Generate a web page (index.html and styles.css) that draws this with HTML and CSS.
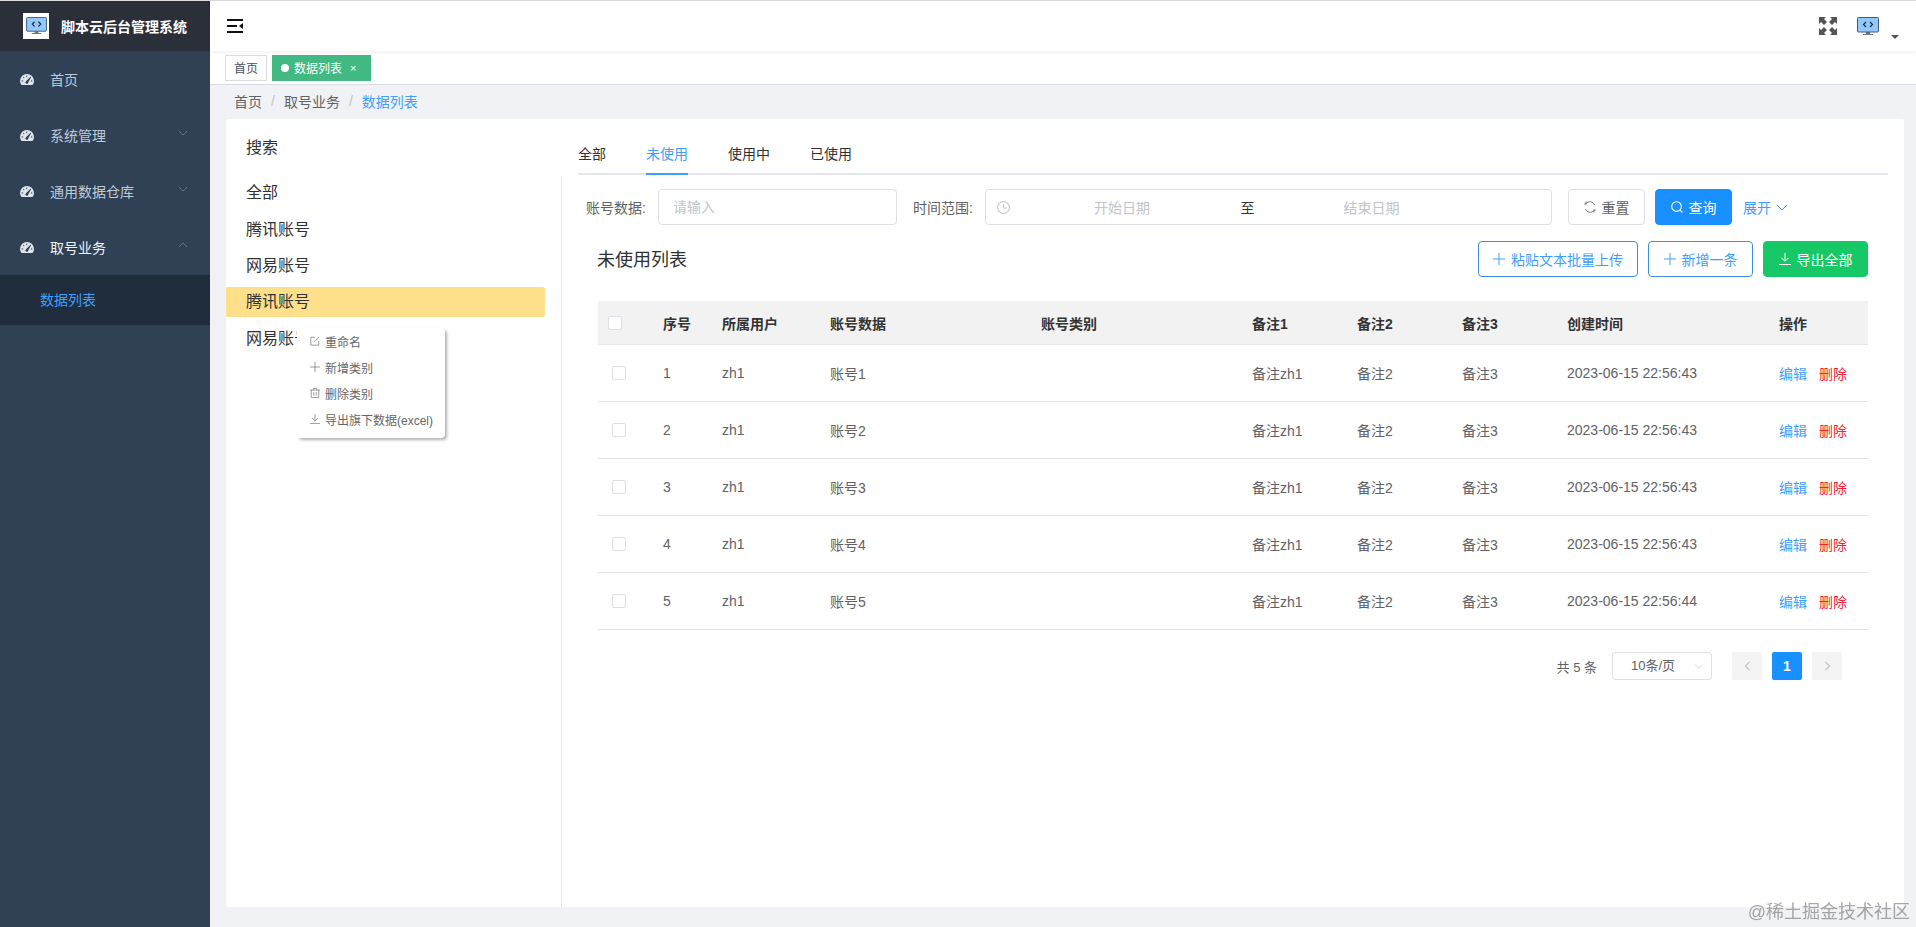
FILE: index.html
```html
<!DOCTYPE html>
<html lang="zh-CN">
<head>
<meta charset="utf-8">
<title>脚本云后台管理系统</title>
<link rel="stylesheet" href="styles.css">
</head>
<body>
<svg class="defs" width="0" height="0" aria-hidden="true">
  <symbol id="gauge" viewBox="0 0 14 11">
    <path fill="#dfe4ea" d="M1.6 11C.6 9.900 0 8.500 0 7a7 7 0 0 1 14 0c0 1.500-.6 2.900-1.600 4z"/>
    <g fill="#304156">
      <circle cx="2.300" cy="7" r=".7"/><circle cx="3.700" cy="3.600" r=".7"/><circle cx="6.800" cy="2.300" r=".7"/><circle cx="11.700" cy="7" r=".7"/>
      <path d="M10.500 2.700l.7.400-3 5.500a1.400 1.400 0 1 1-2.200-1.400z"/>
    </g>
  </symbol>
  <symbol id="monitor" viewBox="0 0 22 19">
    <path fill="#6d7787" d="M9 15h4v2h3v1H6v-1h3z"/>
    <rect x=".5" y=".5" width="21" height="14.500" rx="1" fill="#93c9f8" stroke="#41597a"/>
    <path fill="none" stroke="#1b2a44" stroke-width="1.200" d="M9 5L6.500 7.500 9 10M13 5l2.500 2.500L13 10"/>
  </symbol>
  <symbol id="plus" viewBox="0 0 12 12"><path fill="none" stroke="currentColor" d="M6 0v12M0 6h12"/></symbol>
  <symbol id="download" viewBox="0 0 12 12"><path fill="none" stroke="currentColor" d="M6 0v8M2.500 4.800L6 8.300l3.500-3.500M0 11.500h12"/></symbol>
  <symbol id="chev" viewBox="0 0 12 7"><path fill="none" stroke="currentColor" d="M1 1l5 5 5-5"/></symbol>
</svg>
<div class="app">
  <aside class="sidebar">
    <div class="brand">
      <div class="brand-logo"><svg class="brand-mon"><use href="#monitor"/></svg></div>
      <span class="brand-name">脚本云后台管理系统</span>
    </div>
    <nav>
      <div class="nav-item"><svg class="nav-ic"><use href="#gauge"/></svg><span>首页</span></div>
      <div class="nav-item"><svg class="nav-ic"><use href="#gauge"/></svg><span>系统管理</span><svg class="nav-arrow"><use href="#chev"/></svg></div>
      <div class="nav-item"><svg class="nav-ic"><use href="#gauge"/></svg><span>通用数据仓库</span><svg class="nav-arrow"><use href="#chev"/></svg></div>
      <div class="nav-item nav-open"><svg class="nav-ic"><use href="#gauge"/></svg><span>取号业务</span><svg class="nav-arrow nav-arrow-up"><use href="#chev"/></svg></div>
      <div class="nav-sub">数据列表</div>
    </nav>
  </aside>
  <div class="main">
    <header class="navbar">
      <svg class="hamburger" viewBox="0 0 16 14"><path fill="none" stroke="#111" stroke-width="1.800" d="M0 1h16M0 7h10M0 13h16"/><path fill="#111" d="M12 7l4-3v6z"/></svg>
      <div class="nav-right">
        <svg class="fullscreen" viewBox="0 0 18 18"><path fill="#555" d="M0 0h7L5 2l3 3-3 3-3-3-2 2zM18 0v7l-2-2-3 3-3-3 3-3-2-2zM0 18v-7l2 2 3-3 3 3-3 3 2 2zM18 18h-7l2-2-3-3 3-3 3 3 2-2z"/></svg>
        <svg class="avatar"><use href="#monitor"/></svg>
        <span class="caret"></span>
      </div>
    </header>
    <div class="tags">
      <span class="tag">首页</span>
      <span class="tag tag-on"><i class="tag-dot"></i>数据列表<b class="tag-x">×</b></span>
    </div>
    <div class="content">
      <div class="crumbs">
        <span>首页</span><i>/</i><span>取号业务</span><i>/</i><span class="crumb-on">数据列表</span>
      </div>
      <section class="card">
        <div class="left">
          <div class="left-head">搜索</div>
          <ul class="cats">
            <li>全部</li>
            <li>腾讯账号</li>
            <li>网易账号</li>
            <li class="cat-on">腾讯账号</li>
            <li>网易账号</li>
          </ul>
          <div class="ctx">
            <div class="ctx-item"><svg class="ctx-ic" viewBox="0 0 12 12"><path fill="none" stroke="currentColor" d="M6 1.500H1v9.500h9.500V6M5 7l6-6"/></svg>重命名</div>
            <div class="ctx-item"><svg class="ctx-ic"><use href="#plus"/></svg>新增类别</div>
            <div class="ctx-item"><svg class="ctx-ic" viewBox="0 0 12 12"><path fill="none" stroke="currentColor" d="M0 2.500h12M4 2.500V.5h4v2M1.500 2.500v9h9v-9M4.500 5v4M7.500 5v4"/></svg>删除类别</div>
            <div class="ctx-item"><svg class="ctx-ic"><use href="#download"/></svg>导出旗下数据(excel)</div>
          </div>
        </div>
        <div class="right">
          <div class="tabs">
            <span class="tab">全部</span>
            <span class="tab tab-on">未使用</span>
            <span class="tab">使用中</span>
            <span class="tab">已使用</span>
          </div>
          <div class="filter">
            <label class="f-label">账号数据:</label>
            <div class="input">请输入</div>
            <label class="f-label f-label2">时间范围:</label>
            <div class="range">
              <svg class="clock" viewBox="0 0 12 12"><circle cx="6" cy="6" r="5.500" fill="none" stroke="currentColor"/><path fill="none" stroke="currentColor" d="M6 2.500V6.500H9"/></svg>
              <span class="r-ph">开始日期</span><span class="r-sep">至</span><span class="r-ph">结束日期</span>
            </div>
            <button class="btn btn-reset"><svg class="btn-ic" viewBox="0 0 12 12"><path fill="none" stroke="#777" d="M10.500 4A5 5 0 0 0 2 2.500M1.500 8A5 5 0 0 0 10 9.500"/><path fill="#777" d="M2.500 0v3.500H0zM9.500 12V8.500H12z"/></svg>重置</button>
            <button class="btn btn-query"><svg class="btn-ic" viewBox="0 0 13 13"><circle cx="6" cy="6" r="5.200" fill="none" stroke="#fff" stroke-width="1.200"/><path stroke="#fff" stroke-width="1.200" d="M9.800 9.800l2.500 2.500"/></svg>查询</button>
            <span class="expand">展开<svg class="expand-ic"><use href="#chev"/></svg></span>
          </div>
          <div class="list-head">
            <h2 class="list-title">未使用列表</h2>
            <div class="list-actions">
              <button class="btn btn-line btn-paste"><svg class="btn-ic"><use href="#plus"/></svg>粘贴文本批量上传</button>
              <button class="btn btn-line btn-105"><svg class="btn-ic"><use href="#plus"/></svg>新增一条</button>
              <button class="btn btn-green btn-105"><svg class="btn-ic"><use href="#download"/></svg>导出全部</button>
            </div>
          </div>
          <table class="grid">
            <colgroup>
              <col class="c-sel"><col class="c-no"><col class="c-user"><col class="c-data"><col class="c-type"><col class="c-note"><col class="c-note"><col class="c-note"><col class="c-time"><col>
            </colgroup>
            <thead>
              <tr><th><i class="chk chk-h"></i></th><th>序号</th><th>所属用户</th><th>账号数据</th><th>账号类别</th><th>备注1</th><th>备注2</th><th>备注3</th><th>创建时间</th><th>操作</th></tr>
            </thead>
            <tbody>
              <tr><td><i class="chk"></i></td><td>1</td><td>zh1</td><td>账号1</td><td></td><td>备注zh1</td><td>备注2</td><td>备注3</td><td>2023-06-15 22:56:43</td><td><a class="op-edit">编辑</a><a class="op-del">删除</a></td></tr>
              <tr><td><i class="chk"></i></td><td>2</td><td>zh1</td><td>账号2</td><td></td><td>备注zh1</td><td>备注2</td><td>备注3</td><td>2023-06-15 22:56:43</td><td><a class="op-edit">编辑</a><a class="op-del">删除</a></td></tr>
              <tr><td><i class="chk"></i></td><td>3</td><td>zh1</td><td>账号3</td><td></td><td>备注zh1</td><td>备注2</td><td>备注3</td><td>2023-06-15 22:56:43</td><td><a class="op-edit">编辑</a><a class="op-del">删除</a></td></tr>
              <tr><td><i class="chk"></i></td><td>4</td><td>zh1</td><td>账号4</td><td></td><td>备注zh1</td><td>备注2</td><td>备注3</td><td>2023-06-15 22:56:43</td><td><a class="op-edit">编辑</a><a class="op-del">删除</a></td></tr>
              <tr><td><i class="chk"></i></td><td>5</td><td>zh1</td><td>账号5</td><td></td><td>备注zh1</td><td>备注2</td><td>备注3</td><td>2023-06-15 22:56:44</td><td><a class="op-edit">编辑</a><a class="op-del">删除</a></td></tr>
            </tbody>
          </table>
          <div class="pager">
            <span class="pg-total">共 5 条</span>
            <div class="pg-size">10条/页<svg class="pg-chev"><use href="#chev"/></svg></div>
            <span class="pg-btn"><svg class="pg-arrow" viewBox="0 0 7 12"><path fill="none" stroke="currentColor" stroke-width="1.500" d="M6 1L1 6l5 5"/></svg></span>
            <span class="pg-btn pg-on">1</span>
            <span class="pg-btn"><svg class="pg-arrow" viewBox="0 0 7 12"><path fill="none" stroke="currentColor" stroke-width="1.500" d="M1 1l5 5-5 5"/></svg></span>
          </div>
        </div>
      </section>
    </div>
  </div>
</div>
<div class="watermark">@稀土掘金技术社区</div>
</body>
</html>
```
FILE: styles.css
```css
* { box-sizing: border-box; }
html, body { margin: 0; height: 100%; overflow: hidden; }
body { font-family: "Liberation Sans", "Noto Sans CJK SC", sans-serif; font-size: 14px; color: #606266; background: #fff; }
.defs { position: absolute; }
button { font: inherit; cursor: pointer; }
.app { display: flex; height: 927px; border-top: 1px solid #dcdcdc; }

.sidebar { width: 210px; flex: none; background: #304156; color: #bfcbd9; }
.brand { height: 50px; background: #2b2f3a; display: flex; align-items: center; padding-left: 23px; }
.brand-logo { width: 26px; height: 26px; background: #fff; display: flex; align-items: center; justify-content: center; }
.brand-mon { width: 21px; height: 18px; }
.brand-name { margin-left: 12px; color: #fff; font-weight: 700; font-size: 14px; }
.nav-item { height: 56px; display: flex; align-items: center; padding-left: 20px; }
.nav-ic { width: 14px; height: 11px; margin-right: 16px; }
.nav-open { color: #f4f4f5; }
.nav-arrow { width: 10px; height: 6px; margin-left: auto; margin-right: 22px; margin-top: -5px; color: #6f7f93; }
.nav-arrow-up { transform: rotate(180deg); }
.nav-sub { height: 50px; line-height: 50px; padding-left: 40px; background: #1f2d3d; color: #409eff; }

.main { flex: 1; min-width: 0; display: flex; flex-direction: column; }
.navbar { height: 50px; flex: none; display: flex; align-items: center; padding-left: 17px; background: #fff; box-shadow: 0 1px 4px rgba(0, 21, 41, .08); position: relative; }
.hamburger { width: 16px; height: 14px; }
.nav-right { margin-left: auto; display: flex; align-items: center; padding-right: 17px; }
.fullscreen { width: 18px; height: 18px; }
.avatar { width: 22px; height: 19px; margin-left: 20px; }
.caret { width: 0; height: 0; border: 4px solid transparent; border-top: 4px solid #555; border-bottom: 0; margin-left: 12px; margin-top: 22px; }

.tags { height: 34px; flex: none; display: flex; align-items: center; gap: 5px; padding-left: 15px; background: #fff; border-bottom: 1px solid #d8dce5; }
.tag { height: 26px; display: flex; align-items: center; padding: 0 8px; border: 1px solid #d8dce5; font-size: 12px; color: #495060; background: #fff; }
.tag-on { background: #42b983; border-color: #42b983; color: #fff; width: 99px; }
.tag-dot { width: 8px; height: 8px; border-radius: 50%; background: #fff; margin-right: 5px; }
.tag-x { font-weight: 400; font-size: 11px; margin-left: 8px; }

.content { flex: 1; min-height: 0; display: flex; flex-direction: column; background: #f0f2f5; padding: 0 12px 20px 16px; }
.crumbs { height: 34px; flex: none; display: flex; align-items: center; padding: 0 0 2px 8px; color: #606266; }
.crumbs i { font-style: normal; color: #c0c4cc; margin: 0 9px; }
.crumb-on { color: #409eff; }

.card { flex: 1; min-height: 0; display: flex; background: #fff; border-radius: 2px; }
.left { width: 336px; flex: none; display: flex; flex-direction: column; position: relative; }
.left-head { height: 57px; line-height: 58px; padding-left: 20px; font-size: 16px; color: #303133; }
.cats { flex: 1; list-style: none; margin: 0; padding: 1px 16px 0 0; border-right: 1px solid #e4e7ed; display: flex; flex-direction: column; gap: 6.500px; }
.cats li { height: 30px; line-height: 31px; padding-left: 20px; font-size: 16px; color: #303133; border-radius: 2px; }
.cats .cat-on { background: #fee08b; line-height: 30px; }
.ctx { position: absolute; left: 71px; top: 209px; width: 148px; height: 110px; background: #fff; border-radius: 4px; box-shadow: 2px 2px 3px rgba(0, 0, 0, .3); padding: 0 0 0 13px; font-size: 12px; color: #666; }
.ctx-item { height: 26px; display: flex; align-items: center; white-space: nowrap; }
.ctx-ic { width: 10px; height: 10px; margin-right: 5px; flex: none; color: #888; }

.right { flex: 1; min-width: 0; padding: 0 16px; }
.tabs { height: 39px; margin-top: 17px; display: flex; gap: 40px; border-bottom: 2px solid #e4e7ed; }
.tab { height: 39px; line-height: 37px; color: #303133; }
.tab-on { color: #409eff; border-bottom: 2px solid #409eff; }

.filter { display: flex; align-items: center; height: 36px; margin-top: 14px; padding-left: 8px; }
.f-label { width: 72px; flex: none; color: #606266; }
.f-label2 { margin-left: 16px; }
.input { width: 239px; height: 36px; line-height: 34px; padding-left: 14px; border: 1px solid #dcdfe6; border-radius: 4px; color: #c0c4cc; }
.range { width: 567px; height: 36px; border: 1px solid #dcdfe6; border-radius: 4px; padding-left: 10px; display: grid; grid-template-columns: 21px 210px 41px 207px; align-items: center; text-align: center; }
.clock { width: 13px; height: 13px; margin-left: 1px; color: #c0c4cc; }
.r-ph { color: #c0c4cc; }
.r-sep { color: #303133; }
.btn { height: 36px; display: inline-flex; align-items: center; justify-content: center; border-radius: 4px; border: 1px solid #dcdfe6; background: #fff; color: #606266; padding: 0; }
.btn-ic { width: 12px; height: 12px; margin-right: 6px; flex: none; }
.btn-reset { width: 77px; margin-left: 16px; }
.btn-query { width: 77px; margin-left: 10px; background: #1890ff; border-color: #1890ff; color: #fff; }
.expand { margin-left: 11px; color: #409eff; display: inline-flex; align-items: center; }
.expand-ic { width: 12px; height: 7px; margin-left: 5px; }

.list-head { display: flex; align-items: center; justify-content: space-between; margin: 16px 20px 0 19px; }
.list-title { margin: 0; padding-bottom: 2px; font-size: 18px; font-weight: 400; color: #303133; }
.list-actions { display: flex; gap: 10px; }
.btn-line { color: #409eff; border-color: #3a8ee6; }
.btn-paste { width: 160px; }
.btn-105 { width: 105px; }
.btn-green { background: #16c966; border-color: #16c966; color: #fff; }

.grid { width: 1270px; margin: 24px 0 0 20px; border-collapse: separate; border-spacing: 0; table-layout: fixed; }
.c-sel { width: 55px; } .c-no { width: 59px; } .c-user { width: 108px; } .c-data { width: 211px; } .c-type { width: 211px; } .c-note { width: 105px; } .c-time { width: 212px; }
.grid th { height: 44px; padding: 0 10px; background: #f2f2f2; text-align: left; font-weight: 700; color: #333; border-bottom: 1px solid #e8e8e8; }
.grid td { height: 57px; padding: 0 10px; border-bottom: 1px solid #e3e3e3; color: #606266; }
.grid td:first-child, .grid th:first-child { padding: 0; }
.chk { display: block; width: 14px; height: 14px; border: 1px solid #dcdfe6; border-radius: 2px; background: #fff; margin-left: 14px; }
.chk-h { margin-left: 10px; }
.op-edit { color: #409eff; margin-right: 12px; }
.op-del { color: #f5222d; }

.pager { display: flex; align-items: center; justify-content: flex-end; margin: 22px 41px 0 0; height: 28px; font-size: 13px; }
.pg-total { margin-right: 15px; }
.pg-size { width: 100px; height: 28px; line-height: 26px; border: 1px solid #dcdfe6; border-radius: 3px; padding-left: 18px; margin-right: 15px; position: relative; }
.pg-chev { position: absolute; right: 8px; top: 11px; width: 9px; height: 5px; color: #c0c4cc; }
.pg-btn { width: 30px; height: 28px; margin: 0 5px; display: flex; align-items: center; justify-content: center; background: #f4f4f5; border-radius: 2px; color: #c0c4cc; }
.pg-on { background: #1890ff; color: #fff; font-weight: 700; font-size: 14px; }
.pg-arrow { width: 7px; height: 10px; }

.watermark { position: fixed; right: 6px; bottom: 2px; font-size: 18px; line-height: 26px; color: rgba(120, 120, 120, .65); }
```
